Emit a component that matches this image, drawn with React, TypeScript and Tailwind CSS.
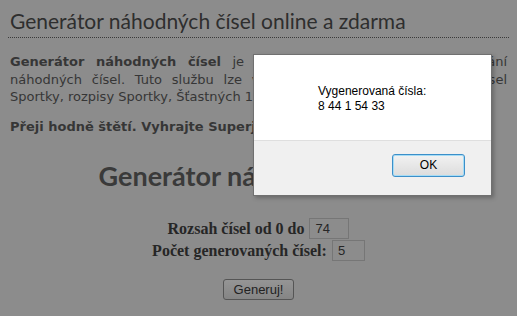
export default function App() {
  return (
    <div className="relative w-[517px] h-[316px] overflow-hidden bg-[#8c8c8c] text-[#333333]">
      {/* Page content (dimmed behind the alert) */}
      <div className="px-[8px]">
        <h1 className="border-b border-dotted border-[#3a3a3a] pl-[2px] pt-[9px] pb-[4px] font-['Lato',sans-serif] text-[21px] leading-[24px] text-[#2e2e2e]">
          Generátor náhodných čísel online a zdarma
        </h1>

        <p className="mt-[15px] px-[2px] font-['DejaVu_Sans',sans-serif] text-[13px] leading-[17.5px] text-[#363636]">
          <span className="block whitespace-nowrap text-justify [text-align-last:justify]">
            <b>Generátor náhodných čísel</b> je jednoduchá aplikace ke generování
          </span>
          <span className="block whitespace-nowrap text-justify [text-align-last:justify]">
            náhodných čísel. Tuto službu lze využít například i pro tipování čísel
          </span>
          <span className="block">Sportky, rozpisy Sportky, Šťastných 10 a dalších.</span>
        </p>

        <p className="mt-[12px] px-[2px] font-['DejaVu_Sans',sans-serif] text-[13px] font-bold leading-[17px] text-[#363636]">
          Přeji hodně štětí. Vyhrajte Superjackpot!
        </p>
      </div>

      <h2 className="mt-[26px] text-center font-['Lato',sans-serif] text-[27px] font-bold leading-[30px] text-[#3a3a3a]">
        Generátor náhodných čísel
      </h2>

      <form className="mt-[27px] flex flex-col items-center font-['Liberation_Serif',serif] text-[16px] font-bold leading-[21px] text-[#262626]">
        <label className="flex items-center gap-[5px]">
          Rozsah čísel od 0 do
          <span className="flex h-[21px] w-[40px] items-center border border-[#767676] pl-[5px] font-['Liberation_Sans',sans-serif] text-[13px] font-normal">
            74
          </span>
        </label>
        <label className="mt-[1px] flex items-center gap-[5px]">
          Počet generovaných čísel:
          <span className="flex h-[21px] w-[33px] items-center border border-[#767676] pl-[5px] font-['Liberation_Sans',sans-serif] text-[13px] font-normal">
            5
          </span>
        </label>
        <button
          type="button"
          className="mt-[18px] h-[21px] w-[71px] rounded-[3px] border border-[#555555] bg-gradient-to-b from-[#959595] to-[#858585] font-['Liberation_Sans',sans-serif] text-[13px] font-normal leading-[19px] text-[#222222]"
        >
          Generuj!
        </button>
      </form>

      {/* Alert dialog */}
      <div className="absolute left-[253px] top-[54px] flex h-[142px] w-[239px] flex-col border border-[#707070] bg-white font-['Liberation_Sans',sans-serif] text-[12px] leading-[15px] text-black shadow-[2px_2px_4px_rgba(0,0,0,0.25)]">
        <div className="flex-1 pl-[64px] pt-[29px]">
          <div>Vygenerovaná čísla:</div>
          <div>8 44 1 54 33</div>
        </div>
        <div className="flex h-[55px] justify-end border-t border-[#dfdfdf] bg-[#f0f0f0] pr-[26px] pt-[13px]">
          <button
            type="button"
            className="h-[23px] w-[73px] rounded-[3px] border border-[#3c8fc9] bg-gradient-to-b from-[#f2f2f2] to-[#dcdcdc] text-[12px] leading-[21px] shadow-[inset_0_0_0_1px_#a6dcf5]"
          >
            OK
          </button>
        </div>
      </div>
    </div>
  );
}
